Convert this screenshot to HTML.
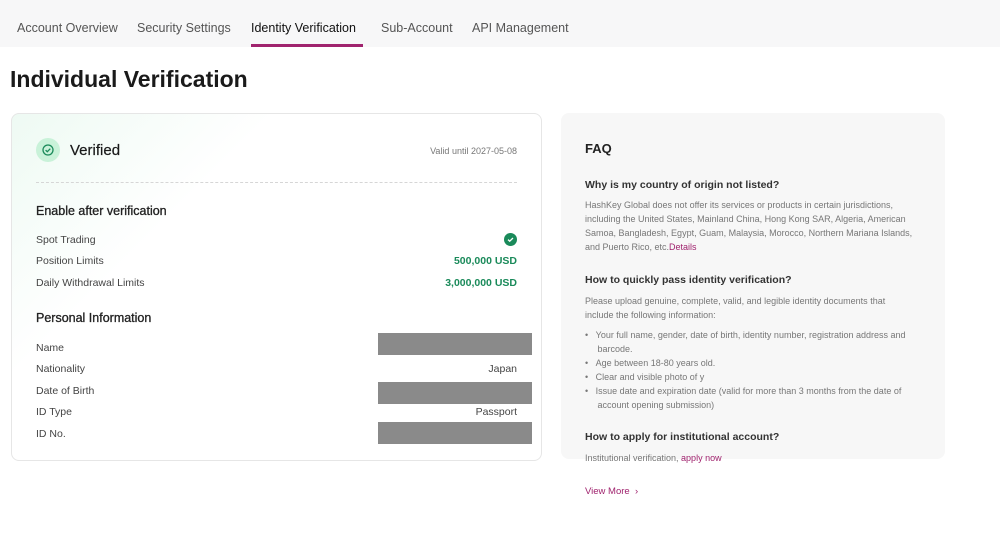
<!DOCTYPE html>
<html><head><meta charset="utf-8"><style>
*{margin:0;padding:0;box-sizing:border-box}
body{width:1000px;height:538px;background:#fff;font-family:"Liberation Sans",sans-serif;position:relative;overflow:hidden;color:#1a1a1a}
.a{position:absolute;white-space:nowrap}
.nav{position:absolute;left:0;top:0;width:1000px;height:47px;background:#f7f7f8}
.tab{position:absolute;top:21px;font-size:12.5px;color:#555}
.card{position:absolute;left:11px;top:113px;width:531px;height:348px;border:1px solid #e6e6e6;border-radius:8px;background:linear-gradient(135deg,#eefaf3 0%,#fff 30%)}
.faq{position:absolute;left:561px;top:113px;width:384px;height:346px;background:#f7f7f7;border-radius:8px}
.l{font-size:10.5px;color:#444}
.r{font-size:10.5px;color:#444;text-align:right}
.g{color:#1a8a5a;font-weight:bold}
.gb{position:absolute;left:378px;width:154px;height:22px;background:#8a8a8a}
.h{font-size:12.5px;color:#222;-webkit-text-stroke:0.3px #222}
.p{font-size:9px;color:#777;line-height:14px}
.pk{color:#a0236e}
</style></head><body>
<div class="nav"></div>
<div class="tab" style="left:17px">Account Overview</div>
<div class="tab" style="left:137px">Security Settings</div>
<div class="tab" style="left:251px;color:#111">Identity Verification</div>
<div style="position:absolute;left:251px;top:44px;width:112px;height:3px;background:#a0236e"></div>
<div class="tab" style="left:381px">Sub-Account</div>
<div class="tab" style="left:472px">API Management</div>
<div class="a" style="left:10px;top:66px;font-size:23px;font-weight:bold;color:#1a1a1a">Individual Verification</div>

<div class="card"></div>
<div style="position:absolute;left:36px;top:138px;width:24px;height:24px;border-radius:50%;background:#c9f2d9"></div>
<svg class="a" style="left:41px;top:143px" width="14" height="14" viewBox="0 0 14 14"><circle cx="7" cy="7" r="5" fill="none" stroke="#1a8a5a" stroke-width="1.3"/><path d="M4.6 7.1l1.7 1.6 3-3" fill="none" stroke="#1a8a5a" stroke-width="1.3"/></svg>
<div class="a" style="left:70px;top:142px;font-size:15px;color:#1a1a1a;-webkit-text-stroke:0.2px #1a1a1a">Verified</div>
<div class="a" style="right:483px;top:146px;font-size:9px;color:#777">Valid until 2027-05-08</div>
<div style="position:absolute;left:36px;top:182px;width:481px;border-top:1px dashed #d6d6d6"></div>
<div class="a h" style="left:36px;top:204px">Enable after verification</div>
<div class="a l" style="left:36px;top:234px">Spot Trading</div>
<svg class="a" style="left:504px;top:233px" width="13" height="13" viewBox="0 0 13 13"><circle cx="6.5" cy="6.5" r="6.5" fill="#1a8a5a"/><path d="M4 6.6l1.7 1.6 3.3-3.2" fill="none" stroke="#fff" stroke-width="1.3"/></svg>
<div class="a l" style="left:36px;top:255px">Position Limits</div>
<div class="a r g" style="right:483px;top:255px">500,000 USD</div>
<div class="a l" style="left:36px;top:277px">Daily Withdrawal Limits</div>
<div class="a r g" style="right:483px;top:277px">3,000,000 USD</div>
<div class="a h" style="left:36px;top:311px">Personal Information</div>
<div class="a l" style="left:36px;top:342px">Name</div>
<div class="gb" style="top:333px"></div>
<div class="a l" style="left:36px;top:363px">Nationality</div>
<div class="a r" style="right:483px;top:363px">Japan</div>
<div class="a l" style="left:36px;top:385px">Date of Birth</div>
<div class="gb" style="top:382px"></div>
<div class="a l" style="left:36px;top:406px">ID Type</div>
<div class="a r" style="right:483px;top:406px">Passport</div>
<div class="a l" style="left:36px;top:428px">ID No.</div>
<div class="gb" style="top:422px"></div>

<div class="faq"></div>
<div class="a" style="left:585px;top:141px;font-size:13px;font-weight:bold;color:#222">FAQ</div>
<div class="a" style="left:585px;top:179px;font-size:10.5px;font-weight:bold;color:#333">Why is my country of origin not listed?</div>
<div class="a p" style="left:585px;top:198px">HashKey Global does not offer its services or products in certain jurisdictions,<br>including the United States, Mainland China, Hong Kong SAR, Algeria, American<br>Samoa, Bangladesh, Egypt, Guam, Malaysia, Morocco, Northern Mariana Islands,<br>and Puerto Rico, etc.<span class="pk">Details</span></div>
<div class="a" style="left:585px;top:274px;font-size:10.5px;font-weight:bold;color:#333">How to quickly pass identity verification?</div>
<div class="a p" style="left:585px;top:294px">Please upload genuine, complete, valid, and legible identity documents that<br>include the following information:</div>
<div class="a p" style="left:585px;top:328px">•&nbsp;&nbsp;&nbsp;Your full name, gender, date of birth, identity number, registration address and<br>&nbsp;&nbsp;&nbsp;&nbsp;&nbsp;barcode.<br>•&nbsp;&nbsp;&nbsp;Age between 18-80 years old.<br>•&nbsp;&nbsp;&nbsp;Clear and visible photo of y<br>•&nbsp;&nbsp;&nbsp;Issue date and expiration date (valid for more than 3 months from the date of<br>&nbsp;&nbsp;&nbsp;&nbsp;&nbsp;account opening submission)</div>
<div class="a" style="left:585px;top:431px;font-size:10.5px;font-weight:bold;color:#333">How to apply for institutional account?</div>
<div class="a p" style="left:585px;top:451px">Institutional verification, <span class="pk">apply now</span></div>
<div class="a" style="left:585px;top:486px;font-size:9.5px;color:#a0236e">View More&nbsp;&nbsp;›</div>
</body></html>
